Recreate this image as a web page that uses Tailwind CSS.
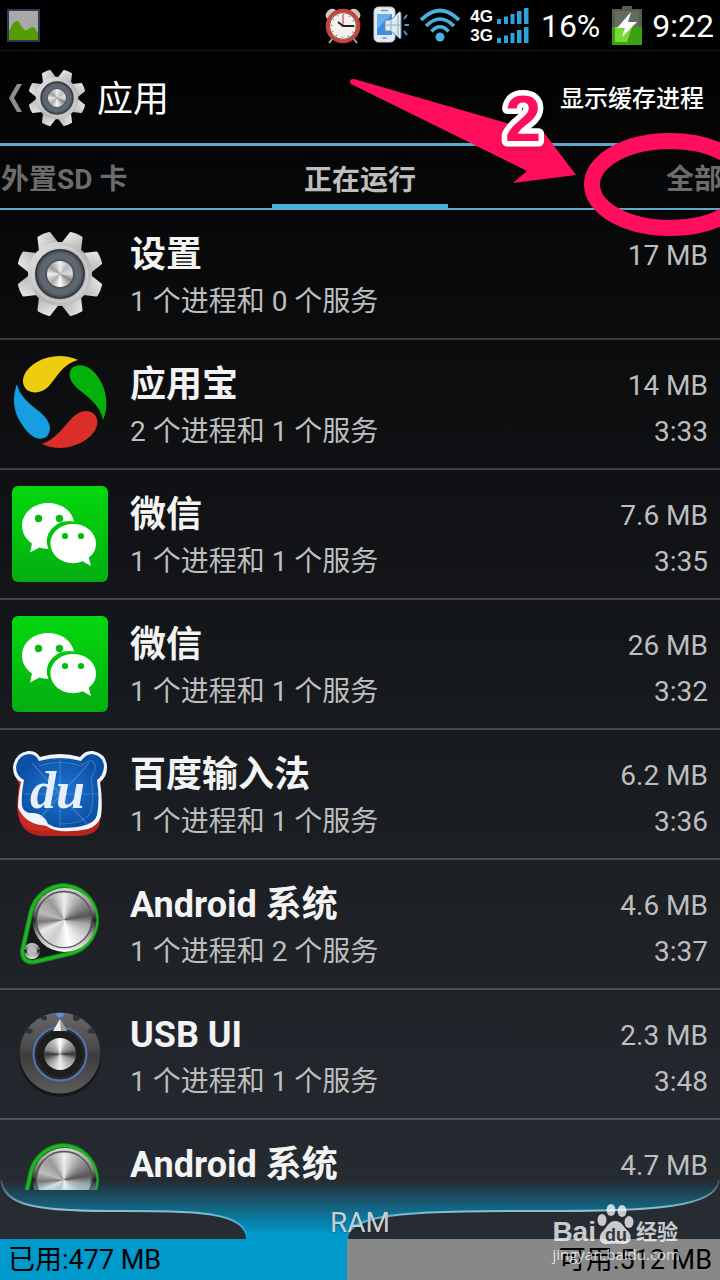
<!DOCTYPE html>
<html lang="zh-CN">
<head>
    <meta charset="UTF-8">
    <meta name="viewport" content="width=device-width, initial-scale=1.0">
    <title>应用</title>
    <script src="https://cdn.jsdelivr.net/npm/@tailwindcss/browser@4"></script>
</head>
<body class="bg-black">

<!-- Shared gradients and icons -->
<svg class="absolute w-0 h-0" aria-hidden="true">
    <defs>
        <linearGradient id="metal" gradientUnits="userSpaceOnUse" x1="10" y1="10" x2="86" y2="86">
            <stop offset="0" stop-color="#f4f4f4"/><stop offset=".3" stop-color="#cfcfcf"/>
            <stop offset=".55" stop-color="#b4b4b4"/><stop offset=".8" stop-color="#c4c4c4"/><stop offset="1" stop-color="#ececec"/>
        </linearGradient>
        <linearGradient id="rim" x1="0" y1="0" x2="0" y2="1">
            <stop offset="0" stop-color="#d8d8d8"/><stop offset=".35" stop-color="#777"/><stop offset=".5" stop-color="#222"/>
            <stop offset=".75" stop-color="#aaa"/><stop offset="1" stop-color="#f5f5f5"/>
        </linearGradient>
        <linearGradient id="wechat-bg" x1="0" y1="0" x2="0" y2="1">
            <stop offset="0" stop-color="#04d80f"/><stop offset="1" stop-color="#03ae10"/>
        </linearGradient>
        <linearGradient id="knob" x1="0" y1="0" x2="0" y2="1">
            <stop offset="0" stop-color="#686868"/><stop offset=".45" stop-color="#4a4a4a"/><stop offset=".52" stop-color="#3c3c3c"/><stop offset="1" stop-color="#5c5c5c"/>
        </linearGradient>
        <radialGradient id="du-blue"><stop offset="0" stop-color="#1f78d2"/><stop offset="1" stop-color="#0c50a5"/></radialGradient>
        <linearGradient id="tooth-fill" x1="0" y1="0" x2="1" y2="1"><stop offset="0" stop-color="#ededed"/><stop offset="1" stop-color="#a6a6a6"/></linearGradient>
        <path id="tooth" d="M37.500 18.500L41 6Q41.200 5 42.200 4.900Q48 4 53.800 4.900Q54.800 5 55 6L58.500 18.500V30H37.500Z"/>
    </defs>
    <symbol id="gear" viewBox="0 0 96 96">
        <g fill="url(#tooth-fill)">
            <use href="#tooth" transform="rotate(22.500 48 48)"/><use href="#tooth" transform="rotate(67.500 48 48)"/>
            <use href="#tooth" transform="rotate(112.500 48 48)"/><use href="#tooth" transform="rotate(157.500 48 48)"/>
            <use href="#tooth" transform="rotate(202.500 48 48)"/><use href="#tooth" transform="rotate(247.500 48 48)"/>
            <use href="#tooth" transform="rotate(292.500 48 48)"/><use href="#tooth" transform="rotate(337.500 48 48)"/>
        </g>
        <circle cx="48" cy="48" r="32" fill="url(#metal)"/>
        <circle cx="48" cy="48" r="27.500" fill="none" stroke="#dedede" stroke-opacity=".6" stroke-width="1.500"/>
        <circle cx="48" cy="48" r="24" fill="#50565f" stroke="#363a41" stroke-width="2"/>
        <circle cx="48" cy="48" r="18" fill="none" stroke="#5f6670" stroke-width="6"/>
    </symbol>
    <symbol id="wechat" viewBox="0 0 96 96">
        <rect width="96" height="96" rx="6" fill="url(#wechat-bg)"/>
        <path fill="#fff" d="M36 17C21.500 17 10 27 10 39.500C10 47 14 53.500 20 57.500L18 66.500L27.500 61.500Q31 63 36.500 62.800A23 20 0 0 1 62 35.500C60 25 49.500 17 36 17Z"/>
        <path fill="#fff" d="M61.200 38C48.500 38 38.500 46.700 38.500 57.500S48.500 77.200 61.200 77.200Q66 77.200 70.500 75.300L79 80L76.700 71.700C81.500 68 84 63.500 84 57.500C84 46.700 74 38 61.200 38Z"/>
        <g fill="#04bb10"><circle cx="26.500" cy="32.500" r="3.700"/><circle cx="47.500" cy="32.500" r="3.700"/><circle cx="53" cy="50" r="3.100"/><circle cx="69" cy="50" r="3.100"/></g>
    </symbol>
    <symbol id="system" viewBox="0 0 96 96">
        <path d="M52 9.500A34.500 34.500 0 0 1 60 77L22 86Q10 87 10.500 74L19 36A34.500 34.500 0 0 1 52 9.500Z" fill="#15181c" stroke="#0f8516" stroke-width="5"/>
        <path d="M52 9.500A34.500 34.500 0 0 1 60 77L22 86Q10 87 10.500 74L19 36A34.500 34.500 0 0 1 52 9.500Z" fill="none" stroke="#21b526" stroke-width="3"/>
        <circle cx="52.500" cy="44" r="32" fill="url(#rim)"/>
        <circle cx="52" cy="43.500" r="28" fill="none" stroke="#555" stroke-width="1.500"/>
        <circle cx="20" cy="75" r="8" fill="url(#rim)"/><circle cx="20" cy="75" r="5" fill="#b9b9b9"/>
    </symbol>
</svg>

<div class="relative h-screen flex flex-col overflow-hidden bg-linear-to-b/srgb from-black to-[#292e35] text-[#bebebe] font-['Roboto','Noto_Sans_CJK_SC',sans-serif]">

    <!-- Status bar -->
    <div class="flex h-[51px] shrink-0 items-center justify-between border-b border-[#161616] bg-black pl-[7px] pr-1.5 text-white">
        <svg class="size-[33px]" viewBox="0 0 33 33">
            <rect x="1" y="1" width="31" height="31" fill="#a9a9a9" stroke="#2c3a55" stroke-width="2"/>
            <path d="M2 22C5 16 7 12 10 12S14 19 18 21C21 22 22 18 26 18Q28 18 31 24V31H2Z" fill="#579a04"/>
        </svg>
        <div class="flex items-center">
            <svg class="w-9 h-[38px]" viewBox="0 0 36 38">
                <path d="M8 32L4 37M28 32L32 37" stroke="#aaa" stroke-width="2"/>
                <ellipse cx="6" cy="8" rx="6" ry="4.500" transform="rotate(-42 6 8)" fill="#c9c9c9"/>
                <ellipse cx="30" cy="8" rx="6" ry="4.500" transform="rotate(42 30 8)" fill="#c9c9c9"/>
                <circle cx="18" cy="20" r="15.500" fill="#f4f1ef" stroke="#c24437" stroke-width="3.600"/>
                <circle cx="18" cy="20" r="13.400" fill="none" stroke="#6d211b" stroke-width=".8"/>
                <circle cx="18" cy="20" r="11.500" fill="none" stroke="#777" stroke-width="1.500" stroke-dasharray="1 5"/>
                <path d="M18 20V9" stroke="#dd6a62" stroke-width="1.500"/><path d="M13 16L18 20H29" fill="none" stroke="#222" stroke-width="2"/>
            </svg>
            <svg class="ml-3 w-9 h-[38px]" viewBox="0 0 36 38">
                <rect x="1" y="1" width="21" height="35" rx="4.500" fill="#e3ebf5" stroke="#bccbdc"/>
                <rect x="4" y="8" width="15" height="21" fill="#3f8fe0"/><path d="M4 8H19L4 23Z" fill="#6aaef0"/><path d="M8 4.500H15" stroke="#8796a8" stroke-width="1.500"/><rect x="9" y="31" width="5" height="2" rx="1" fill="#9aa8b8"/>
                <path d="M12 14H18L26 6Q28 5 28 8V31Q28 34 26 32L18 25H12Z" fill="#dfe9f4" stroke="#6f8aa8"/>
                <path d="M13 19H27M18 15V24M25 9V30" stroke="#a9bccf" stroke-width="1.500"/>
                <path d="M31 13L34 9M31.500 19H36M31 25L34 29" stroke="#42a5d8" stroke-width="2"/>
            </svg>
            <svg class="ml-[10px] w-[42px] h-[34px]" viewBox="0 0 42 34" fill="none" stroke="#49b1e0" stroke-width="3.600">
                <path d="M2 12Q21 -7 40 12"/><path d="M7 18Q21 4 35 18"/><path d="M12.500 23.500Q21 14 29.500 23.500"/><circle cx="21" cy="29" r="4.500" fill="#49b1e0" stroke="none"/>
            </svg>
            <div class="ml-[9px] pt-0.5 font-['Liberation_Sans',sans-serif] text-[17px] font-bold leading-[19px]">
                <p>4G</p>
                <p>3G</p>
            </div>
            <svg class="ml-1 w-8 h-[37px]" viewBox="0 0 32 37" fill="#2aa5df">
                <path d="M0 12H4V17H0ZM7 9.500H11V17H7ZM13.500 7H17.500V17H13.500ZM20 4H24.500V17H20ZM27 1H31.500V17H27Z"/>
                <path d="M0 31H4V36H0ZM7 28.500H11V36H7ZM13.500 26H17.500V36H13.500ZM20 23H24.500V36H20ZM27 20H31.500V36H27Z"/>
            </svg>
            <span class="ml-3 pt-0.5 text-[32px] leading-10">16%</span>
            <svg class="ml-3 w-[30px] h-[39px]" viewBox="0 0 30 39">
                <path d="M0 3H10V0H20V3H30V39H0Z" fill="#555c50"/><path d="M3 5H27V21H3Z" fill="#646b60"/>
                <path d="M0 21H30V39H0Z" fill="#3ba10e"/><path d="M3 21H20L15 36H3Z" fill="#76dc35"/>
                <path d="M19 6L5 22H13L10 31L25 16H16Z" fill="#fff"/>
            </svg>
            <span class="ml-[10px] pt-0.5 text-[32px] leading-10">9:22</span>
        </div>
    </div>

    <!-- Action bar -->
    <header class="flex h-[95px] shrink-0 items-center justify-between border-b-3 border-[#5ba9cb] pl-2 pr-4 pt-0.5 text-white">
        <button type="button" class="flex items-center">
            <svg class="w-[14px] h-7" viewBox="0 0 14 28"><path d="M9 0H14L6 14L14 28H9L1 14Z" fill="#8e8e8e"/></svg>
            <span class="relative ml-[3px] size-16">
                <svg class="size-16"><use href="#gear"/></svg>
                <span class="absolute inset-[23px] rounded-full bg-[conic-gradient(#eee,#bbb_12%,#ddd_25%,#888_33%,#fff_50%,#aaa_62%,#eee_75%,#999_85%,#eee)]"></span>
            </span>
            <h1 class="ml-2 pt-1 text-4xl leading-10">应用</h1>
        </button>
        <button type="button" class="pt-0.5 text-2xl font-medium">显示缓存进程</button>
    </header>

    <!-- Tabs -->
    <nav class="grid h-16 shrink-0 grid-cols-[1fr_176px_1fr] border-b-2 border-[#5ba9cb] text-[28px] font-bold text-[#6c6c6c]">
        <button type="button" class="pl-px pt-1.5 text-left">外置SD 卡</button>
        <button type="button" class="border-b-4 border-[#43b1dc] pt-3 text-[#bebebe]">正在运行</button>
        <button type="button" class="-mr-0.5 pt-1.5 text-right">全部</button>
    </nav>

    <!-- Running apps -->
    <ul class="min-h-0 flex-1 overflow-hidden">
        <li class="flex h-[130px] gap-[22px] border-b-2 border-white/20 px-3 pt-4">
            <div class="relative size-24">
                <svg class="size-24"><use href="#gear"/></svg>
                <span class="absolute inset-[35px] rounded-full bg-[conic-gradient(#eee,#bbb_12%,#ddd_25%,#888_33%,#fff_50%,#aaa_62%,#eee_75%,#999_85%,#eee)]"></span>
            </div>
            <div class="flex-1 pt-[5px]">
                <h2 class="text-4xl leading-12 font-bold text-[#f3f3f3]">设置</h2>
                <p class="text-[28px] leading-[46px]">1 个进程和 0 个服务</p>
            </div>
            <div class="pt-[7px] text-right text-[28px] leading-[46px]">
                <p>17 MB</p>
            </div>
        </li>
        <li class="flex h-[130px] gap-[22px] border-b-2 border-white/20 px-3 pt-4">
            <svg class="size-24" viewBox="0 0 96 96">
                <path d="M66 4C53 -2 37 -1 25 6C11 14 7 27 15 34C21 38 30 37 36 31C45 22 49 9 66 4Z" fill="#edcd0d"/>
                <path d="M91 64C97 50 95 34 86 21C79 10 67 6 60 12C55 18 58 26 66 33C77 42 88 49 91 64Z" fill="#03b10b"/>
                <path d="M30 88C45 95 60 92 72 85C85 77 89 65 82 58C74 52 66 56 59 63C50 73 43 83 30 88Z" fill="#dc2e29"/>
                <path d="M5 28C0 41 1 55 9 67C18 82 29 87 36 79C41 71 36 63 28 56C17 48 7 39 5 28Z" fill="#159fe1"/>
            </svg>
            <div class="flex-1 pt-[5px]">
                <h2 class="text-4xl leading-12 font-bold text-[#f3f3f3]">应用宝</h2>
                <p class="text-[28px] leading-[46px]">2 个进程和 1 个服务</p>
            </div>
            <div class="pt-[7px] text-right text-[28px] leading-[46px]">
                <p>14 MB</p>
                <p>3:33</p>
            </div>
        </li>
        <li class="flex h-[130px] gap-[22px] border-b-2 border-white/20 px-3 pt-4">
            <svg class="size-24"><use href="#wechat"/></svg>
            <div class="flex-1 pt-[5px]">
                <h2 class="text-4xl leading-12 font-bold text-[#f3f3f3]">微信</h2>
                <p class="text-[28px] leading-[46px]">1 个进程和 1 个服务</p>
            </div>
            <div class="pt-[7px] text-right text-[28px] leading-[46px]">
                <p>7.6 MB</p>
                <p>3:35</p>
            </div>
        </li>
        <li class="flex h-[130px] gap-[22px] border-b-2 border-white/20 px-3 pt-4">
            <svg class="size-24"><use href="#wechat"/></svg>
            <div class="flex-1 pt-[5px]">
                <h2 class="text-4xl leading-12 font-bold text-[#f3f3f3]">微信</h2>
                <p class="text-[28px] leading-[46px]">1 个进程和 1 个服务</p>
            </div>
            <div class="pt-[7px] text-right text-[28px] leading-[46px]">
                <p>26 MB</p>
                <p>3:32</p>
            </div>
        </li>
        <li class="flex h-[130px] gap-[22px] border-b-2 border-white/20 px-3 pt-4">
            <svg class="size-24" viewBox="0 0 96 96">
                <path d="M1 26L7 38Q4 60 6 68Q8 80 14 84Q20 90 34 90H66Q80 90 86 82Q91 74 88 38L94 28Z" fill="#b8231d"/>
                <path d="M16 5Q24 4 28 11Q48 5 68 11Q73 4 81 5Q95 8 95 21Q95 31 88 36Q91 55 89 70Q86 80 76 83Q62 86 48 85Q40 84 34 80Q12 78 6 62Q6 50 9 36Q1 32 1 21Q3 7 16 5Z" fill="#eef5fc"/>
                <path d="M6 62Q14 79 34 80L40 84Q22 88 12 79Q6 73 6 62Z" fill="#cb2b23"/>
                <path d="M17 8Q24 8 27 15Q48 9 69 15Q74 8 80 8Q92 10 92 21Q91 30 85 34Q88 54 85 69Q82 82 48 82Q41 81 36 78Q32 68 22 67Q12 68 10 60Q9 50 12 34Q4 30 4 21Q6 9 17 8Z" fill="url(#du-blue)"/>
                <g fill="none" stroke="#7db4ea" stroke-opacity=".35" stroke-width="1.200"><path d="M48 13V82M12 48H86M20 17L76 79M77 17L28 72"/><path d="M27 20Q48 13 69 20Q76 14 80 15Q87 20 79 32Q83 54 78 68Q70 78 48 78"/></g>
                <text x="18" y="62" class="font-['Liberation_Serif',serif] text-[52px] font-bold italic" fill="#e6effb">du</text>
            </svg>
            <div class="flex-1 pt-[5px]">
                <h2 class="text-4xl leading-12 font-bold text-[#f3f3f3]">百度输入法</h2>
                <p class="text-[28px] leading-[46px]">1 个进程和 1 个服务</p>
            </div>
            <div class="pt-[7px] text-right text-[28px] leading-[46px]">
                <p>6.2 MB</p>
                <p>3:36</p>
            </div>
        </li>
        <li class="flex h-[130px] gap-[22px] border-b-2 border-white/20 px-3 pt-4">
            <div class="relative size-24">
                <svg class="size-24"><use href="#system"/></svg>
                <span class="absolute left-[25px] top-[17px] size-[54px] rounded-full bg-[conic-gradient(#eee,#999_12%,#555_22%,#aaa_28%,#ddd_38%,#fff_47%,#ccc_58%,#e8e8e8_68%,#777_74%,#bbb_80%,#999_90%,#eee)]"></span>
            </div>
            <div class="flex-1 pt-[5px]">
                <h2 class="text-4xl leading-12 font-bold text-[#f3f3f3]">Android 系统</h2>
                <p class="text-[28px] leading-[46px]">1 个进程和 2 个服务</p>
            </div>
            <div class="pt-[7px] text-right text-[28px] leading-[46px]">
                <p>4.6 MB</p>
                <p>3:37</p>
            </div>
        </li>
        <li class="flex h-[130px] gap-[22px] border-b-2 border-white/20 px-3 pt-4">
            <div class="relative size-24">
                <svg class="size-24" viewBox="0 0 96 96">
                    <circle cx="48" cy="50" r="41" fill="#15181b"/>
                    <circle cx="48" cy="47" r="40.500" fill="url(#knob)"/>
                    <g fill="#303236"><path d="M14 23Q20 21 21 26Q18 29 12 26ZM28 11Q35 7 35 13Q31 17 28 11ZM61 9Q69 9 68 13Q63 17 61 13ZM75 26Q77 21 82 23L84 27Q77 29 75 26Z"/></g>
                    <path d="M44 7H52Q52 11 48 11.500Q44 11 44 7Z" fill="#5b90e6"/>
                    <circle cx="48" cy="48" r="26.500" fill="#29292a" stroke="#5075bd" stroke-width="2"/>
                    <circle cx="48" cy="48" r="23" fill="#1d1d1d"/>
                    <path d="M48 13L55 25H41Z" fill="#ececec"/><path d="M48 13L55 25H49Z" fill="#999"/>
                </svg>
                <span class="absolute inset-8 rounded-full bg-[conic-gradient(#fff,#aaa_10%,#777_20%,#333_25%,#999_32%,#eee_50%,#999_65%,#333_75%,#888_80%,#bbb_92%,#fff)]"></span>
            </div>
            <div class="flex-1 pt-[5px]">
                <h2 class="text-4xl leading-12 font-bold text-[#f3f3f3]">USB UI</h2>
                <p class="text-[28px] leading-[46px]">1 个进程和 1 个服务</p>
            </div>
            <div class="pt-[7px] text-right text-[28px] leading-[46px]">
                <p>2.3 MB</p>
                <p>3:48</p>
            </div>
        </li>
        <li class="flex h-[130px] gap-[22px] px-3 pt-4">
            <div class="relative size-24">
                <svg class="size-24"><use href="#system"/></svg>
                <span class="absolute left-[25px] top-[17px] size-[54px] rounded-full bg-[conic-gradient(#eee,#999_12%,#555_22%,#aaa_28%,#ddd_38%,#fff_47%,#ccc_58%,#e8e8e8_68%,#777_74%,#bbb_80%,#999_90%,#eee)]"></span>
            </div>
            <div class="flex-1 pt-[5px]">
                <h2 class="text-4xl leading-12 font-bold text-[#f3f3f3]">Android 系统</h2>
            </div>
            <div class="pt-[7px] text-right text-[28px] leading-[46px]">
                <p>4.7 MB</p>
            </div>
        </li>
    </ul>

    <!-- Memory usage -->
    <footer class="shrink-0">
        <div class="relative flex h-[49px] items-center justify-center pt-4">
            <svg class="absolute bottom-0 left-0 h-[59px] w-full" viewBox="0 0 720 59" preserveAspectRatio="none">
                <defs>
                    <linearGradient id="glow" gradientUnits="userSpaceOnUse" x1="0" y1="0" x2="0" y2="54">
                        <stop offset="0" stop-color="#0099cc" stop-opacity="0"/><stop offset="1" stop-color="#0099cc"/>
                    </linearGradient>
                    <linearGradient id="line" gradientUnits="userSpaceOnUse" x1="0" y1="0" x2="0" y2="59">
                        <stop offset="0" stop-color="#8fbfce" stop-opacity=".2"/><stop offset=".5" stop-color="#8fbfce"/><stop offset="1" stop-color="#0099cc"/>
                    </linearGradient>
                </defs>
                <path d="M1 0C5 24 30 31 110 31C190 31 247 30 247 59H347C347 30 430 31 560 31C680 31 717 22 719 0Z" fill="url(#glow)"/>
                <path d="M1 0C5 24 30 31 110 31C190 31 247 30 247 59M347 59C347 30 430 31 560 31C680 31 717 22 719 0" fill="none" stroke="url(#line)" stroke-width="2"/>
            </svg>
            <span class="relative text-[28px] leading-8 text-[#c6d0d4] text-shadow-md">RAM</span>
        </div>
        <div class="flex h-[41px] items-center bg-[#888] text-[27px] text-black">
            <div class="flex h-full items-center bg-[#0099cc] pl-2 pt-0.5" style="width: 48.2%">已用:477 MB</div>
            <div class="flex-1 pr-2 pt-0.5 text-right">可用:512 MB</div>
        </div>
    </footer>

    <!-- Step marker -->
    <svg class="pointer-events-none absolute right-0 top-[70px] h-[180px] w-[380px]" viewBox="340 70 380 180">
        <path d="M354 79L545 134L576 175L513 183L527 171L351 84Q348 79 354 79Z" fill="#ff0f5b"/>
        <ellipse cx="670" cy="184.500" rx="78" ry="43.500" fill="none" stroke="#ff0f5b" stroke-width="16"/>
        <text x="505" y="141" class="font-['Liberation_Sans',sans-serif] text-[65px] font-bold drop-shadow-md" fill="#ff0f5b" stroke="#fff" stroke-width="11" stroke-linejoin="round" paint-order="stroke">2</text>
    </svg>

    <!-- Watermark -->
    <div class="pointer-events-none absolute bottom-4 right-10 text-white/75">
        <div class="flex items-end leading-7">
            <span class="font-['Liberation_Sans',sans-serif] text-[28px] font-bold leading-6">Bai</span>
            <svg class="h-[42px] w-10" viewBox="-1 0 40 42">
                <g fill="#fff" fill-opacity=".75"><ellipse cx="5" cy="18" rx="4.500" ry="6"/><ellipse cx="14" cy="8" rx="4.500" ry="6"/><ellipse cx="25" cy="9" rx="4.500" ry="6"/><ellipse cx="32" cy="20" rx="4.500" ry="6"/>
                <path d="M18 19C25 19 26 25 31 29C36 34 34 43 25 42Q18 41 11 42C2 43 1 35 5 30C10 26 11 19 18 19Z"/></g>
                <text x="8" y="39" class="font-['Liberation_Sans',sans-serif] text-[18px] font-bold" fill="#33383e">du</text>
            </svg>
            <span class="text-[21px] font-bold leading-6">经验</span>
        </div>
        <p class="font-['Open_Sans',sans-serif] text-[15px] font-medium leading-5">jingyan.baidu.com</p>
    </div>
</div>

</body>
</html>
